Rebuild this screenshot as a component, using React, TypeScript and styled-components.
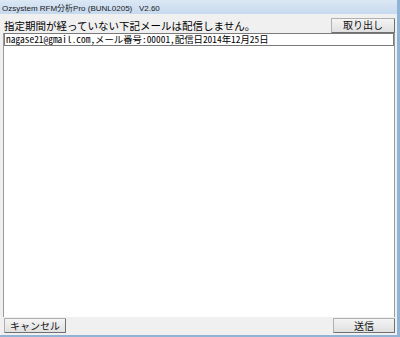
import React from "react";
import styled, { createGlobalStyle } from "styled-components";

const Global = createGlobalStyle`
  html, body { margin: 0; padding: 0; background: #f0f0f0; }
  body { width: 400px; height: 337px; overflow: hidden; }
`;

const Window = styled.div`
  width: 400px;
  height: 337px;
  box-sizing: border-box;
  display: flex;
  flex-direction: column;
  background: #f0f0f0;
  border-right: 3px solid #8fb4d6;
  border-bottom: 2px solid #8fb4d6;
  font-family: "Noto Sans CJK JP", sans-serif;
  color: #000;
`;

const TitleBar = styled.div`
  height: 14px;
  flex: none;
  display: flex;
  align-items: center;
  padding-left: 2px;
  background: linear-gradient(#dbe8f5, #c6d9ee);
  font-family: "Liberation Sans", "Noto Sans CJK JP", sans-serif;
  font-size: 8px;
  color: #1a1a1a;
  white-space: pre;
`;

const Body = styled.div`
  flex: 1;
  display: flex;
  flex-direction: column;
  padding: 3px 2px 0 3px;
  min-height: 0;
`;

const TopRow = styled.div`
  display: flex;
  align-items: center;
  justify-content: space-between;
  height: 16px;
`;

const Label = styled.span`
  font-size: 10.5px;
  line-height: 12px;
  padding-left: 1px;
  padding-top: 2px;
`;

const Button = styled.button<{ $width: number }>`
  width: ${(p) => p.$width}px;
  height: 15px;
  padding: 0;
  margin: 0;
  box-sizing: border-box;
  background: linear-gradient(#f4f4f4, #e0e0e0);
  border: 1px solid #b0b0b0;
  border-right-color: #707070;
  border-bottom-color: #707070;
  border-radius: 1px;
  font-family: "Noto Sans CJK JP", sans-serif;
  font-size: 10px;
  line-height: 12px;
  color: #111;
`;

const ListBox = styled.div`
  flex: 1;
  background: #fff;
  border-left: 1px solid #9a9a9a;
  border-right: 1px solid #9a9a9a;
  display: flex;
  flex-direction: column;
`;

const Row = styled.div`
  height: 11px;
  border: 1px solid #7a7a7a;
  font-family: "Noto Sans Mono CJK JP", "DejaVu Sans Mono", monospace;
  font-size: 9.4px;
  line-height: 11px;
  white-space: nowrap;
  overflow: hidden;
  padding-left: 1px;
`;

const BottomRow = styled.div`
  display: flex;
  justify-content: space-between;
  align-items: center;
  height: 17px;
  padding: 0 0 1px 1px;
`;

export default function App() {
  return (
    <>
      <Global />
      <Window>
        <TitleBar>Ozsystem RFM分析Pro (BUNL0205)   V2.60</TitleBar>
        <Body>
          <TopRow>
            <Label>指定期間が経っていない下記メールは配信しません。</Label>
            <Button $width={64}>取り出し</Button>
          </TopRow>
          <ListBox>
            <Row>nagase21@gmail.com,メール番号:00001,配信日2014年12月25日</Row>
          </ListBox>
          <BottomRow>
            <Button $width={62}>キャンセル</Button>
            <Button $width={62}>送信</Button>
          </BottomRow>
        </Body>
      </Window>
    </>
  );
}
